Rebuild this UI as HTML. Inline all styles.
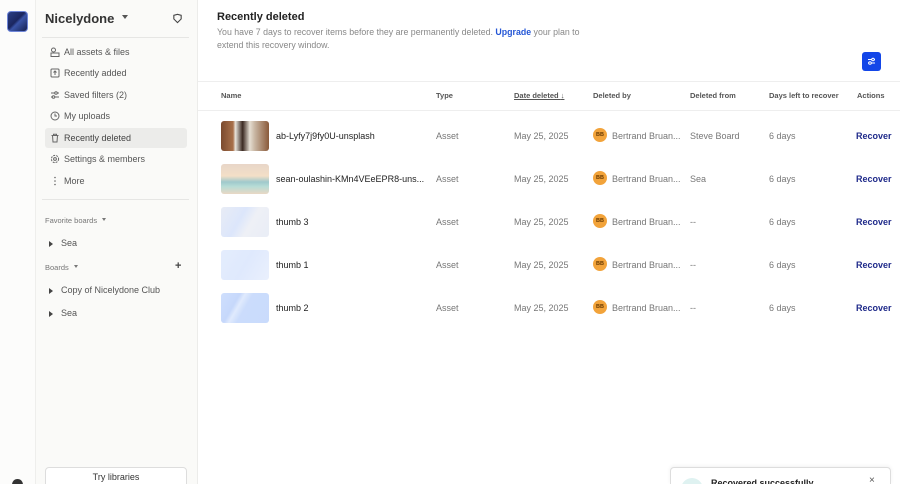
<!DOCTYPE html>
<html><head><meta charset="utf-8"><style>
*{box-sizing:border-box;margin:0;padding:0}
html,body{width:900px;height:484px;overflow:hidden}
body{font-family:"Liberation Sans",sans-serif;background:#fff;position:relative;color:#222}
.wrap{position:absolute;left:0;top:0;width:900px;height:484px;overflow:hidden}
.rail{position:absolute;left:0;top:0;width:36px;height:484px;background:#fcfcfb;border-right:1px solid #eeeeec;overflow:hidden}
.logo{position:absolute;left:7px;top:11px;width:21px;height:21px;border-radius:4px;background:linear-gradient(135deg,#2a3f86 0%,#1b2660 45%,#3a54a8 55%,#16204f 100%);border:1.5px solid #6f86d8}
.side{position:absolute;left:36px;top:0;width:162px;height:484px;background:#fafaf8;border-right:1px solid #ececea;overflow:hidden}
.ws{position:absolute;left:9px;top:11px;font-size:13px;font-weight:bold;color:#333}
.ws:after{content:"";display:inline-block;border:3px solid transparent;border-top:4px solid #555;margin-left:8px;vertical-align:1px}
.sep{position:absolute;left:6px;right:8px;height:1px;background:#e6e6e4}
.nav{position:absolute;left:9px;width:142px;height:20px;font-size:9px;color:#555;line-height:20px;padding-left:19px;border-radius:3px}
.nav svg{position:absolute;left:5px;top:5px}
.nav.act{background:#ececea;color:#444}
.sec{position:absolute;left:9px;font-size:7.5px;color:#777}
.sec:after{content:"";display:inline-block;border:2.5px solid transparent;border-top:3px solid #777;margin-left:5px;vertical-align:0}
.bd{position:absolute;left:13px;font-size:9px;color:#555;padding-left:12px}
.bd:before{content:"";position:absolute;left:0;top:3px;border:3px solid transparent;border-left:4px solid #444}
.try{position:absolute;left:9px;top:467px;width:142px;height:24px;border:1px solid #ddd;border-radius:4px;background:#fff;font-size:9px;text-align:center;line-height:19px;color:#333}
.main{position:absolute;left:198px;top:0;right:0;height:484px}
h1{position:absolute;left:19px;top:11px;font-size:11px;font-weight:bold;color:#222}
.desc{position:absolute;left:19px;top:26px;width:370px;font-size:8.8px;line-height:13px;color:#888}
.desc b{color:#2456d6}
.fbtn{position:absolute;left:664px;top:52px;width:19px;height:19px;background:#1346e8;border-radius:3px}
.hl{position:absolute;left:0;right:0;height:1px;background:#eeeeee}
.th{position:absolute;top:91px;font-size:7.5px;color:#555;font-weight:bold}
.c{position:absolute;font-size:9px;color:#777;white-space:nowrap}
.nm{color:#222;font-size:9px}
.th2{position:absolute;width:48px;height:30px;border-radius:3px}
.av{position:absolute;width:14px;height:14px;border-radius:50%;background:#f2a33a;font-size:5.5px;font-weight:bold;color:#6a3a00;text-align:center;line-height:14px}
.rec{position:absolute;left:658px;font-size:9px;font-weight:bold;color:#1f2a8a}
.toast{position:absolute;left:670px;top:467px;width:221px;height:17px;background:#fff;border:1px solid #ddd;border-bottom:none;border-radius:4px 4px 0 0;box-shadow:0 -1px 4px rgba(0,0,0,.06);overflow:hidden}
</style></head><body><div class="wrap">
<div class="rail"><div class="logo"></div>
<div style="position:absolute;left:12px;top:479px;width:11px;height:11px;border-radius:50%;background:#333"></div></div>
<div class="side">
<div class="ws">Nicelydone</div>
<svg style="position:absolute;left:136px;top:13px" width="11" height="11" viewBox="0 0 12 12"><path d="M6 10.5 2 6.5V2.5L6 1.5 10 2.5V6.5Z" fill="none" stroke="#444" stroke-width="1.2"/></svg>
<div class="sep" style="top:37px"></div>
<div class="nav" style="top:42px"><svg width="10" height="10" viewBox="0 0 10 10"><circle cx="3.5" cy="3" r="2" fill="none" stroke="#666"/><rect x="1" y="6" width="8" height="3.5" fill="none" stroke="#666"/></svg>All assets &amp; files</div>
<div class="nav" style="top:63px"><svg width="10" height="10" viewBox="0 0 10 10"><rect x="1" y="1" width="8" height="8" rx="1" fill="none" stroke="#666"/><path d="M5 3v4M3.5 4.5 5 3 6.5 4.5" fill="none" stroke="#666"/></svg>Recently added</div>
<div class="nav" style="top:85px"><svg width="10" height="10" viewBox="0 0 10 10"><path d="M1 3h8M1 7h8" stroke="#666"/><circle cx="6" cy="3" r="1.3" fill="#fafaf8" stroke="#666"/><circle cx="3.5" cy="7" r="1.3" fill="#fafaf8" stroke="#666"/></svg>Saved filters (2)</div>
<div class="nav" style="top:106px"><svg width="10" height="10" viewBox="0 0 10 10"><circle cx="5" cy="5" r="4" fill="none" stroke="#666"/><path d="M5 2.5V5h2" fill="none" stroke="#666"/></svg>My uploads</div>
<div class="nav act" style="top:128px"><svg width="10" height="10" viewBox="0 0 10 10"><path d="M1.5 2.5h7M3.5 2.5V1.2h3v1.3M2.5 2.5l.5 6.5h4l.5-6.5" fill="none" stroke="#666"/></svg>Recently deleted</div>
<div class="nav" style="top:149px"><svg width="10" height="10" viewBox="0 0 10 10"><circle cx="5" cy="5" r="3.6" fill="none" stroke="#666" stroke-dasharray="2 1"/><circle cx="5" cy="5" r="1.4" fill="none" stroke="#666"/></svg>Settings &amp; members</div>
<div class="nav" style="top:171px"><svg width="10" height="10" viewBox="0 0 10 10"><circle cx="5" cy="1.5" r=".8" fill="#666"/><circle cx="5" cy="5" r=".8" fill="#666"/><circle cx="5" cy="8.5" r=".8" fill="#666"/></svg>More</div>
<div class="sep" style="top:199px"></div>
<div class="sec" style="top:216px">Favorite boards</div>
<div class="bd" style="top:238px">Sea</div>
<div class="sec" style="top:263px">Boards</div>
<div style="position:absolute;left:139px;top:260px;font-size:11px;color:#444;font-weight:bold">+</div>
<div class="bd" style="top:285px">Copy of Nicelydone Club</div>
<div class="bd" style="top:308px">Sea</div>
<div class="try">Try libraries</div>
</div>
<div class="main">
<h1>Recently deleted</h1>
<div class="desc">You have 7 days to recover items before they are permanently deleted. <b>Upgrade</b> your plan to extend this recovery window.</div>
<div class="fbtn"><svg width="19" height="19" viewBox="0 0 19 19"><path d="M6 7.5h7M6 11h7" stroke="#fff" stroke-width="1"/><circle cx="11" cy="7.5" r="1.3" fill="#1346e8" stroke="#fff"/><circle cx="8" cy="11" r="1.3" fill="#1346e8" stroke="#fff"/></svg></div>
<div class="hl" style="top:81px"></div>
<div class="hl" style="top:110px"></div>
<div class="th" style="left:23px">Name</div>
<div class="th" style="left:238px">Type</div>
<div class="th" style="left:316px;text-decoration:underline">Date deleted <span style="text-decoration:none;font-weight:normal">↓</span></div>
<div class="th" style="left:395px">Deleted by</div>
<div class="th" style="left:492px">Deleted from</div>
<div class="th" style="left:571px">Days left to recover</div>
<div class="th" style="left:659px">Actions</div>

<div class="th2" style="left:23px;top:121px;background:linear-gradient(90deg,#7a4a2e 0%,#a8704a 25%,#e9e4dc 30%,#3b2a22 45%,#e5ddd2 60%,#c9b7a4 70%,#8a5a3a 100%)"></div>
<div class="th2" style="left:23px;top:164px;background:linear-gradient(180deg,#e8d6c8 0%,#f3dfc7 40%,#9fc9cc 60%,#b7dcd6 75%,#e9d8c4 100%)"></div>
<div class="th2" style="left:23px;top:207px;background:linear-gradient(120deg,#e8ecf5 0%,#dce6fb 40%,#eef0f6 60%,#e9edf6 100%)"></div>
<div class="th2" style="left:23px;top:250px;background:linear-gradient(120deg,#e4edfd 0%,#dfe9fd 50%,#eaf0fd 100%)"></div>
<div class="th2" style="left:23px;top:293px;background:linear-gradient(120deg,#cfdffd 0%,#c6d8fb 30%,#e0eafd 38%,#cbdcfc 50%,#c9dbfc 100%)"></div>

<div class="c nm" style="left:78px;top:131px">ab-Lyfy7j9fy0U-unsplash</div>
<div class="c nm" style="left:78px;top:174px">sean-oulashin-KMn4VEeEPR8-uns...</div>
<div class="c nm" style="left:78px;top:217px">thumb 3</div>
<div class="c nm" style="left:78px;top:260px">thumb 1</div>
<div class="c nm" style="left:78px;top:303px">thumb 2</div>

<div class="c" style="left:238px;top:131px">Asset</div><div class="c" style="left:316px;top:131px">May 25, 2025</div><div class="av" style="left:395px;top:128px">BB</div><div class="c" style="left:414px;top:131px">Bertrand Bruan...</div><div class="c" style="left:492px;top:131px">Steve Board</div><div class="c" style="left:571px;top:131px">6 days</div><div class="rec" style="top:131px">Recover</div>
<div class="c" style="left:238px;top:174px">Asset</div><div class="c" style="left:316px;top:174px">May 25, 2025</div><div class="av" style="left:395px;top:171px">BB</div><div class="c" style="left:414px;top:174px">Bertrand Bruan...</div><div class="c" style="left:492px;top:174px">Sea</div><div class="c" style="left:571px;top:174px">6 days</div><div class="rec" style="top:174px">Recover</div>
<div class="c" style="left:238px;top:217px">Asset</div><div class="c" style="left:316px;top:217px">May 25, 2025</div><div class="av" style="left:395px;top:214px">BB</div><div class="c" style="left:414px;top:217px">Bertrand Bruan...</div><div class="c" style="left:492px;top:217px">--</div><div class="c" style="left:571px;top:217px">6 days</div><div class="rec" style="top:217px">Recover</div>
<div class="c" style="left:238px;top:260px">Asset</div><div class="c" style="left:316px;top:260px">May 25, 2025</div><div class="av" style="left:395px;top:257px">BB</div><div class="c" style="left:414px;top:260px">Bertrand Bruan...</div><div class="c" style="left:492px;top:260px">--</div><div class="c" style="left:571px;top:260px">6 days</div><div class="rec" style="top:260px">Recover</div>
<div class="c" style="left:238px;top:303px">Asset</div><div class="c" style="left:316px;top:303px">May 25, 2025</div><div class="av" style="left:395px;top:300px">BB</div><div class="c" style="left:414px;top:303px">Bertrand Bruan...</div><div class="c" style="left:492px;top:303px">--</div><div class="c" style="left:571px;top:303px">6 days</div><div class="rec" style="top:303px">Recover</div>
</div>
<div class="toast">
<div style="position:absolute;left:10px;top:10px;width:22px;height:22px;border-radius:50%;background:#dff2f1"></div>
<div style="position:absolute;left:40px;top:10px;font-size:9px;font-weight:bold;color:#222">Recovered successfully</div>
<div style="position:absolute;left:198px;top:7px;font-size:10px;color:#555">×</div>
</div>
</div></body></html>
